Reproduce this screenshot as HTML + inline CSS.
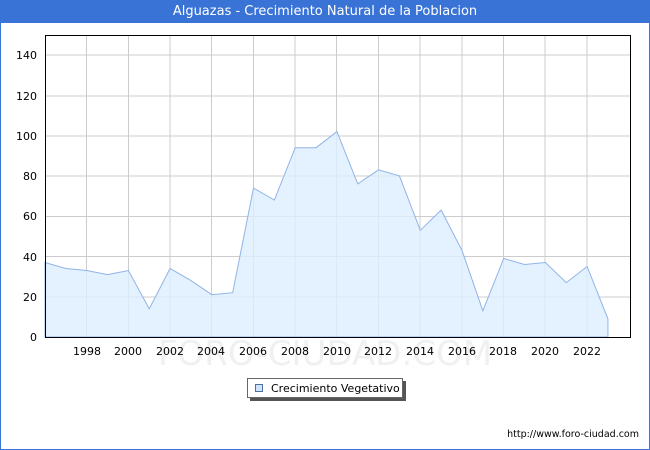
<!DOCTYPE html>
<html><head><meta charset="utf-8"><style>
html,body{margin:0;padding:0;background:#fff}
body{width:650px;height:450px;position:relative;overflow:hidden;font-family:"DejaVu Sans","Liberation Sans",sans-serif}
.frame{position:absolute;left:0;top:0;width:648px;height:448px;border:1px solid #3a73d6}
.title{position:absolute;left:0;top:0;width:650px;height:23px;background:#3a73d6;color:#fff;font-size:13px;line-height:23px;text-align:center}
</style></head><body>
<div class="frame"></div>
<div class="title">Alguazas - Crecimiento Natural de la Poblacion</div>
<svg width="650" height="450" style="position:absolute;left:0;top:0" font-family="DejaVu Sans, Liberation Sans, sans-serif">
<g stroke="#cccccc" stroke-width="1">
<line x1="45" y1="297" x2="630" y2="297"/><line x1="45" y1="256.5" x2="630" y2="256.5"/><line x1="45" y1="216.5" x2="630" y2="216.5"/><line x1="45" y1="176" x2="630" y2="176"/><line x1="45" y1="136" x2="630" y2="136"/><line x1="45" y1="96" x2="630" y2="96"/><line x1="45" y1="55" x2="630" y2="55"/>
<line x1="86.5" y1="35" x2="86.5" y2="337"/><line x1="128.5" y1="35" x2="128.5" y2="337"/><line x1="170" y1="35" x2="170" y2="337"/><line x1="211.5" y1="35" x2="211.5" y2="337"/><line x1="253.5" y1="35" x2="253.5" y2="337"/><line x1="295" y1="35" x2="295" y2="337"/><line x1="336.5" y1="35" x2="336.5" y2="337"/><line x1="378.5" y1="35" x2="378.5" y2="337"/><line x1="420" y1="35" x2="420" y2="337"/><line x1="462" y1="35" x2="462" y2="337"/><line x1="503.5" y1="35" x2="503.5" y2="337"/><line x1="545" y1="35" x2="545" y2="337"/><line x1="587" y1="35" x2="587" y2="337"/>
</g>
<text x="325" y="365" font-size="34" fill="#f0f0f0" text-anchor="middle">FORO-CIUDAD.COM</text>
<polygon fill="#ddeeff" fill-opacity="0.8" stroke="#8fb4e6" stroke-width="1" points="45,337 45,262.5 65.85,268.5 86.7,270.5 107.55,274.6 128.4,270.5 149.25,308.8 170.1,268.5 190.95,280.6 211.8,294.7 232.65,292.7 253.5,188 274.35,200 295.2,147.7 316.05,147.7 336.9,131.6 357.75,183.9 378.6,169.8 399.45,175.9 420.3,230.3 441.15,210.1 462,250.4 482.85,310.8 503.7,258.5 524.55,264.5 545.4,262.5 566.25,282.6 587.1,266.5 607.95,318.9 607.95,337"/>
<rect x="45.5" y="35.5" width="585" height="302" fill="none" stroke="#000" stroke-width="1"/>
<g font-size="11" fill="#000" text-anchor="end">
<text x="37" y="341">0</text><text x="37" y="301">20</text><text x="37" y="261">40</text><text x="37" y="220">60</text><text x="37" y="180">80</text><text x="37" y="140">100</text><text x="37" y="100">120</text><text x="37" y="59">140</text>
</g>
<g font-size="11" fill="#000" text-anchor="middle">
<text x="87" y="355">1998</text><text x="128" y="355">2000</text><text x="170" y="355">2002</text><text x="211" y="355">2004</text><text x="253" y="355">2006</text><text x="295" y="355">2008</text><text x="337" y="355">2010</text><text x="378" y="355">2012</text><text x="420" y="355">2014</text><text x="462" y="355">2016</text><text x="503" y="355">2018</text><text x="545" y="355">2020</text><text x="587" y="355">2022</text>
</g>
<rect x="250" y="381" width="156" height="20" fill="#555"/>
<rect x="247.5" y="378.5" width="155" height="19" fill="#fff" stroke="#666"/>
<rect x="255.5" y="384.5" width="7" height="7" fill="#cfe3fb" stroke="#4a6fa0"/>
<text x="271" y="392" font-size="11" fill="#000">Crecimiento Vegetativo</text>
<text x="639" y="437" font-size="9.5" fill="#000" text-anchor="end">http://www.foro-ciudad.com</text>
</svg>
</body></html>
